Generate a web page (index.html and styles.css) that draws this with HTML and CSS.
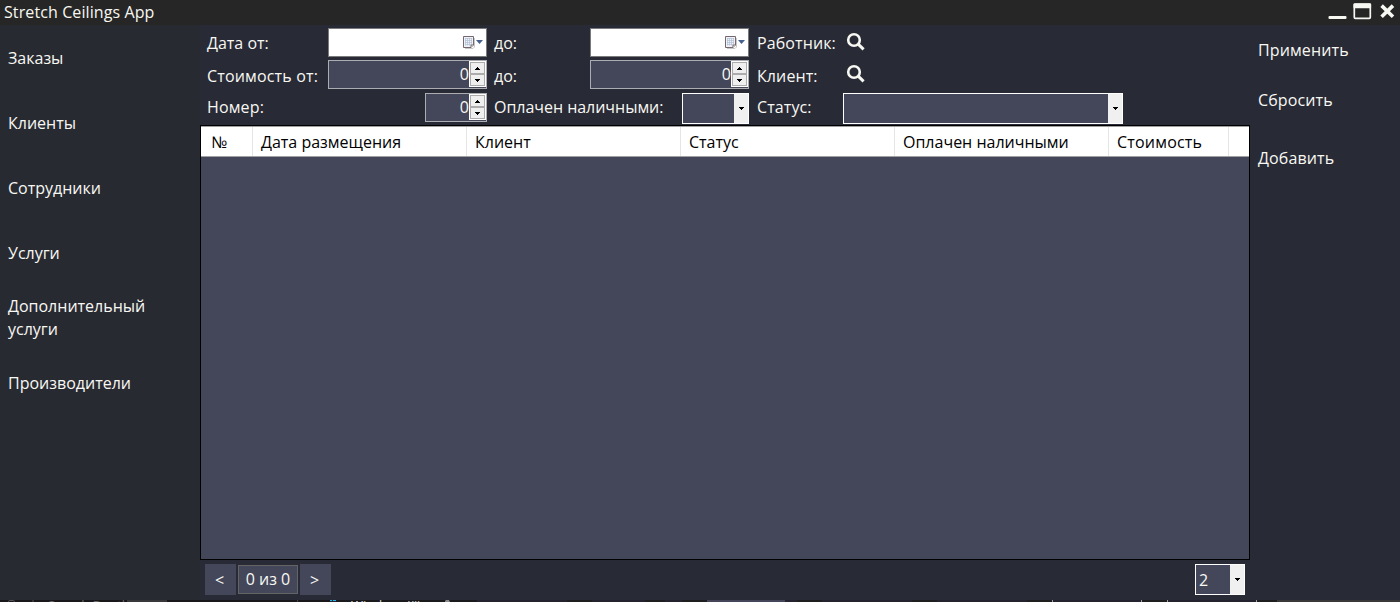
FILE: index.html
```
<!DOCTYPE html>
<html lang="ru">
<head>
<meta charset="utf-8">
<title>Stretch Ceilings App</title>
<link rel="stylesheet" href="styles.css">
</head>
<body>
<svg class="defs" width="0" height="0">
  <defs>
    <symbol id="search" viewBox="0 0 20 20"><circle cx="8" cy="8" r="5.8" fill="none" stroke="#f8f8f2" stroke-width="2.6"/><path d="M12.2 12.2L17.6 17.3" stroke="#f8f8f2" stroke-width="3"/></symbol>
    <symbol id="down" viewBox="0 0 5 3"><path d="M0 0H5V1H4V2H3V3H2V2H1V1H0Z"/></symbol>
    <symbol id="up" viewBox="0 0 5 3"><path d="M2 0H3V1H4V2H5V3H0V2H1V1H2Z"/></symbol>
    <symbol id="calendar" viewBox="0 0 22 14">
      <path d="M2 12.5H10L11.5 11V2" fill="none" stroke="#c8c8c8"/>
      <path d="M.5.5H10.5V9L8 11.5H.5Z" fill="#eef2f9" stroke="#75676b"/>
      <path d="M2 2.5H9M2 4.5H9M2 6.5H9M2 8.5H8M2.5 2V9.500M4.500 2V9.500M6.500 2V9.500M8.500 2V8.500" stroke="#b3bfd4" stroke-width=".7" fill="none"/>
      <path d="M8 11.5V9H10.5" fill="#fff" stroke="#75676b"/>
      <path d="M13 4H20L16.5 8Z" fill="#45608c"/>
    </symbol>
  </defs>
</svg>
<div class="window">
  <header class="titlebar">
    <span class="title">Stretch Ceilings App</span>
    <svg class="controls" width="62" height="20" viewBox="0 0 62 20">
      <rect x=".5" y="16" width="18" height="3" rx="1" fill="#f8f8f2"/>
      <rect x="26.300" y="4.300" width="16" height="14" rx="1" fill="none" stroke="#f8f8f2" stroke-width="1.7"/>
      <rect x="25.5" y="3.3" width="17.600" height="5" rx="1" fill="#f8f8f2"/>
      <path d="M53.3 5.8L64.7 16.9M64.7 5.8L53.3 16.9" transform="translate(.3 -.2)" stroke="#f8f8f2" stroke-width="3.6"/>
    </svg>
  </header>
  <div class="body">
    <nav class="sidebar">
      <a>Заказы</a><a>Клиенты</a><a>Сотрудники</a><a>Услуги</a><a class="two-line">Дополнительный услуги</a><a>Производители</a>
    </nav>
    <main class="main">
      <section class="filters">
        <div class="row">
          <label class="l1">Дата от:</label>
          <div class="field date"><svg width="22" height="14"><use href="#calendar"/></svg></div>
          <label class="l2">до:</label>
          <div class="field date"><svg width="22" height="14"><use href="#calendar"/></svg></div>
          <label class="l3">Работник:</label>
          <svg class="search" width="20" height="20"><use href="#search"/></svg>
        </div>
        <div class="row second">
          <label class="l1">Стоимость от:</label>
          <div class="field number">0<div class="spin"><i><svg width="5" height="3"><use href="#up"/></svg></i><i><svg width="5" height="3"><use href="#down"/></svg></i></div></div>
          <label class="l2">до:</label>
          <div class="field number">0<div class="spin"><i><svg width="5" height="3"><use href="#up"/></svg></i><i><svg width="5" height="3"><use href="#down"/></svg></i></div></div>
          <label class="l3">Клиент:</label>
          <svg class="search" width="20" height="20"><use href="#search"/></svg>
        </div>
        <div class="row third">
          <label class="l-number">Номер:</label>
          <div class="field number short">0<div class="spin"><i><svg width="5" height="3"><use href="#up"/></svg></i><i><svg width="5" height="3"><use href="#down"/></svg></i></div></div>
          <label class="l-cash">Оплачен наличными:</label>
          <div class="combo cash"><span></span><b><svg width="5" height="3"><use href="#down"/></svg></b></div>
          <label class="l3">Статус:</label>
          <div class="combo status"><span></span><b><svg width="5" height="3"><use href="#down"/></svg></b></div>
        </div>
      </section>
      <section class="grid">
        <div class="head">
          <span class="no">№</span><span>Дата размещения</span><span>Клиент</span><span>Статус</span><span>Оплачен наличными</span><span class="cost">Стоимость</span>
        </div>
      </section>
      <footer class="pager">
        <button>&lt;</button><div class="count">0 из 0</div><button>&gt;</button>
        <div class="combo size"><span>2</span><b><svg width="5" height="3"><use href="#down"/></svg></b></div>
      </footer>
    </main>
    <aside class="actions"><a>Применить</a><a>Сбросить</a><a class="add">Добавить</a></aside>
  </div>
  <svg class="underlay" width="1400" height="2" viewBox="0 0 1400 2">
    <rect width="1400" height="2" fill="#24222e"/>
    <rect width="330" height="2" fill="#191719"/>
    <rect x="127" width="40" height="2" fill="#38383a"/>
    <path d="M297 0h1v2h-1z" fill="#444"/>
    <path d="M330 0h2v1h-2zM333 0h3v1h-3z" fill="#1fb6e8"/>
    <path d="M336 0H477V2H336Z" fill="#1a191c"/>
    <path d="M567 0h25v2h-25zM645 0h20v2h-20zM682 0h25v2h-25zM797 0h25v2h-25zM912 0h25v2h-25zM1027 0h25v2h-25zM1142 0h25v2h-25zM1257 0h20v2h-20z" fill="#1e1e1e"/>
    <rect x="707" width="78" height="2" fill="#45455a"/>
    <path d="M1052 0h1v2h-1zM1141 0h1v2h-1zM1167 0h1v2h-1zM1256 0h1v2h-1z" fill="#9c9aa2"/>
    <rect x="1277" width="123" height="2" fill="#3a3839"/>
    <path d="M8 1.500L10 .5H13L15 1.500M33 0V2" fill="none" stroke="#555"/>
    <text x="48" y="10" fill="#686868">Search Depth</text>
    <text x="351" y="10" fill="#d8d8d8">Windows((i)</text>
    <path d="M445 1L446 0H449L450 2H445Z" fill="#8b8b8b"/>
  </svg>
</div>
</body>
</html>
```
FILE: styles.css
```
* { box-sizing: border-box; }
body { margin: 0; overflow: hidden; background: #282a36; color: #f8f8f2; font: 16px/22px "Open Sans", "Noto Sans", sans-serif; }
.defs { display: block; height: 0; }
.window { width: 1400px; height: 602px; display: flex; flex-direction: column; }
.titlebar { height: 25px; flex: none; background: #262626; display: flex; justify-content: space-between; padding: 1px 10px 0 4px; }
.title { letter-spacing: .1px; }
.controls { margin-top: -1px; overflow: visible; }
.body { height: 575px; display: grid; grid-template-columns: 200px 1050px 150px; }
.sidebar { background: #282a32; display: flex; flex-direction: column; padding-left: 8px; }
.sidebar a { height: 65px; display: flex; align-items: center; padding-top: 1px; }
.sidebar .two-line { width: 150px; line-height: 23px; padding-top: 1px; }
.main { display: flex; flex-direction: column; min-width: 0; }
.filters { height: 100px; padding: 3px 0 0 7px; }
.row { display: flex; height: 29px; white-space: nowrap; }
.second { margin-top: 3px; }
.third { margin-top: 4px; }
.row label { flex: none; padding-top: 4px; }
.second label { padding-top: 5px; }
.third label { padding-top: 3px; }
.l1 { width: 121px; }
.second .l1 { letter-spacing: .17px; }
.l2 { width: 103px; padding-left: 7px; }
.l3 { width: 86px; padding-left: 8px; letter-spacing: .1px; }
.l-number { width: 218px; letter-spacing: .15px; }
.l-cash { width: 195px; padding-left: 7px; letter-spacing: -.03px; }
.field { width: 159px; height: 29px; border: 1px solid #7a7a7a; display: flex; justify-content: flex-end; }
.date { background: #fff; padding: 7px 1px 0 0; }
.number { background: #44475a; border-color: #abadb3; line-height: 27px; }
.short { width: 62px; }
.spin { width: 17px; height: 26px; background: #fff; padding: 1px; display: flex; flex-direction: column; }
.spin i { flex: 1; border: 1px solid #acacac; background: #efefef; display: flex; align-items: center; justify-content: center; }
.search { margin: 4px 0 0 3px; }
.row .search { margin-left: 3px; }
.combo { height: 31px; flex: none; border: 1px solid #fff; background: #44475a; display: flex; }
.combo span { flex: 1; padding: 4px 0 0 3px; }
.combo b { width: 14px; background: #f0f0f0; display: flex; align-items: center; justify-content: center; }
.cash { width: 67px; }
.status { width: 280px; }
.row .l3 { width: 94px; }
.row .search { margin-left: 3px; }
.grid { height: 435px; border: 1px solid #000; background: #44475a; }
.head { height: 31px; display: flex; background: #fff; color: #000; border-top: 1px solid #a0a0a0; border-bottom: 1px solid #a0a0a0; }
.head span { width: 214px; padding: 4px 0 0 8px; border-right: 1px solid #e5e5e5; }
.head .no { width: 52px; padding-left: 10px; }
.head .cost { width: 120px; letter-spacing: .2px; }
.pager { display: flex; padding: 4px 5px 0; gap: 2px; align-items: flex-start; }
.pager button { width: 31px; height: 31px; padding: 0 2px 0 0; border: 0; background: #44475a; color: inherit; font: inherit; }
.count { width: 60px; height: 29px; margin-top: 1px; border: 1px solid #646464; background: #44475a; text-align: center; line-height: 27px; }
.size { width: 50px; margin-left: auto; }
.actions { display: flex; flex-direction: column; padding: 14px 0 0 8px; letter-spacing: .13px; }
.actions a { height: 50px; }
.actions .add { margin-top: 8px; }
.underlay { display: block; flex: none; font-size: 13px; }
```
